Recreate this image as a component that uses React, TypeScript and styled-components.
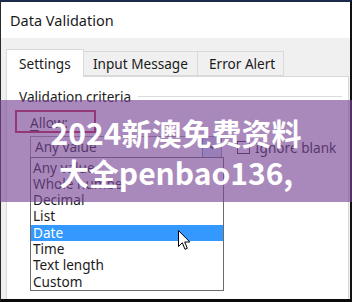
import React from "react";
import styled, { createGlobalStyle } from "styled-components";

const Global = createGlobalStyle`
  html, body { margin: 0; padding: 0; background: #ffffff; }
  body { width: 352px; height: 302px; overflow: hidden; }
  * { box-sizing: border-box; }
`;

const UI = `"Noto Sans", "Open Sans", sans-serif`;

const Root = styled.div`
  position: relative;
  width: 352px;
  height: 302px;
  overflow: hidden;
`;

const Dialog = styled.div`
  width: 352px;
  height: 302px;
  display: flex;
  flex-direction: column;
  background: #f0f0f0;
  border-top: 2px solid #1b2a48;
  border-left: 1px solid #2a2a2a;
  border-right: 2px solid #111111;
  border-bottom: 3px solid #0a0a0a;
  font-family: ${UI};
  color: #1a1a1a;
`;

const TitleBar = styled.div`
  height: 36px;
  flex: none;
  background: #ffffff;
  display: flex;
  align-items: center;
  padding-left: 9px;
  font-size: 14.5px;
  color: #1a1a1a;
`;

const Body = styled.div`
  flex: 1;
  display: flex;
  flex-direction: column;
  padding: 11px 1px 0 5px;
`;

const TabStrip = styled.div`
  display: flex;
  align-items: flex-end;
  height: 27px;
  flex: none;
`;

const Tab = styled.div<{ $active?: boolean; $w: number; $pl: number }>`
  height: ${(p) => (p.$active ? 28 : 25)}px;
  margin-bottom: ${(p) => (p.$active ? -1 : 0)}px;
  position: relative;
  z-index: ${(p) => (p.$active ? 2 : 1)};
  width: ${(p) => p.$w}px;
  display: flex;
  align-items: center;
  padding-left: ${(p) => p.$pl}px;
  font-size: 13.6px;
  background: ${(p) => (p.$active ? "#ffffff" : "#f0f0f0")};
  border: 1px solid #d9d9d9;
  border-bottom: ${(p) => (p.$active ? "none" : "1px solid #d9d9d9")};
  & + & { border-left: none; }
`;

const Panel = styled.div`
  position: relative;
  flex: 1;
  background: #ffffff;
  border: 1px solid #d9d9d9;
  border-bottom: none;
  padding: 10px 6px 0 12px;
`;

const GroupHeader = styled.div`
  display: flex;
  align-items: center;
  gap: 7px;
  height: 18px;
  font-size: 13.6px;
`;

const GroupLine = styled.div`
  flex: 1;
  height: 1px;
  background: #dcdcdc;
`;

const FieldLabel = styled.div`
  margin: 9px 0 0 11px;
  height: 18px;
  font-size: 13.6px;
  line-height: 18px;
  & u { text-decoration: underline; text-underline-offset: 2px; }
`;

const FieldRow = styled.div`
  display: flex;
  align-items: center;
  margin: 4px 0 0 11px;
  height: 22px;
`;

const Combo = styled.div`
  width: 192px;
  height: 22px;
  display: flex;
  border: 1px solid #9a9a9a;
  background: #ffffff;
`;

const ComboText = styled.div`
  flex: 1;
  font-size: 13.6px;
  line-height: 20px;
  padding-left: 4px;
`;

const ComboButton = styled.div`
  width: 19px;
  display: flex;
  align-items: center;
  justify-content: center;
  background: #cfe2f6;
  border-left: 1px solid #5a9ad8;
`;

const Check = styled.div`
  width: 13px;
  height: 13px;
  margin-left: 15px;
  border: 1px solid #333333;
  background: #ffffff;
`;

const CheckLabel = styled.div`
  margin-left: 5px;
  font-size: 13.6px;
`;

const Annotation = styled.div`
  position: absolute;
  left: 8px;
  top: 33px;
  width: 81px;
  height: 23px;
  border: 2px solid #c61d3e;
`;

const DropList = styled.div`
  position: absolute;
  left: 23px;
  top: 80px;
  width: 194px;
  height: 134px;
  border: 1px solid #6b6b6b;
  background: #ffffff;
  padding-top: 1.5px;
  z-index: 3;
`;

const Item = styled.div<{ $sel?: boolean }>`
  height: 16.3px;
  line-height: 16.3px;
  font-size: 13.6px;
  padding-left: 2px;
  background: ${(p) => (p.$sel ? "#3399ff" : "transparent")};
  color: ${(p) => (p.$sel ? "#ffffff" : "#1a1a1a")};
`;

const Pointer = styled.svg`
  position: absolute;
  left: 171px;
  top: 153px;
  z-index: 4;
`;

const Banner = styled.div`
  position: absolute;
  left: 0;
  right: 0;
  top: 100px;
  height: 102px;
  background: rgba(120, 70, 150, 0.64);
  display: flex;
  align-items: center;
  justify-content: center;
  z-index: 10;
`;

const BannerText = styled.div`
  font-family: "Noto Sans CJK SC", "Noto Sans", sans-serif;
  font-weight: 700;
  font-size: 30px;
  line-height: 40px;
  color: #ffffff;
  text-align: center;
  margin-top: 1px;
`;

const items = [
  "Any value",
  "Whole number",
  "Decimal",
  "List",
  "Date",
  "Time",
  "Text length",
  "Custom",
];

export default function App() {
  return (
    <Root>
      <Global />
      <Dialog>
        <TitleBar>Data Validation</TitleBar>
        <Body>
          <TabStrip>
            <Tab $active $w={78} $pl={12}>Settings</Tab>
            <Tab $w={114} $pl={9}>Input Message</Tab>
            <Tab $w={86} $pl={11}>Error Alert</Tab>
          </TabStrip>
          <Panel>
            <GroupHeader>
              <span>Validation criteria</span>
              <GroupLine />
            </GroupHeader>
            <FieldLabel>
              <u>A</u>llow:
            </FieldLabel>
            <FieldRow>
              <Combo>
                <ComboText>Any value</ComboText>
                <ComboButton>
                  <svg width="9" height="6" viewBox="0 0 9 6">
                    <path d="M1 1 L4.5 4.5 L8 1" fill="none" stroke="#333" strokeWidth="1.2" />
                  </svg>
                </ComboButton>
              </Combo>
              <Check />
              <CheckLabel>Ignore blank</CheckLabel>
            </FieldRow>
            <Annotation />
            <DropList>
              {items.map((t) => (
                <Item key={t} $sel={t === "Date"}>
                  {t}
                </Item>
              ))}
            </DropList>
            <Pointer width="13" height="21" viewBox="0 0 13 21">
              <path
                d="M0.5 0.5 L0.5 16.5 L4.3 12.8 L7 19.3 L9.3 18.3 L6.7 12 L11.8 12 Z"
                fill="#ffffff"
                stroke="#000000"
                strokeWidth="1"
                strokeLinejoin="miter"
              />
            </Pointer>
          </Panel>
        </Body>
      </Dialog>
      <Banner>
        <BannerText>
          2024新澳免费资料
          <br />
          大全penbao136,
        </BannerText>
      </Banner>
    </Root>
  );
}
